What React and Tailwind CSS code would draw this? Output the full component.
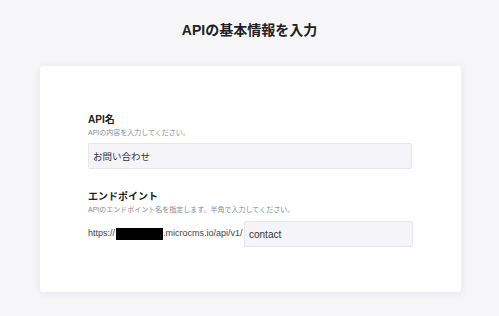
import React from "react";

const font = { fontFamily: '"Liberation Sans", "Noto Sans CJK JP", sans-serif' };

export default function App() {
    return (
        <div style={font} className="min-h-[316px] w-full bg-[#f6f6f9] pt-[20px]">
            <h1 className="text-center text-[14px] leading-[20px] font-bold text-[#222]">APIの基本情報を入力</h1>
            <section className="mx-[40px] mt-[26px] w-[421px] rounded-[3px] bg-white px-[48px] pt-[47px] pb-[45px] shadow-[0_1px_10px_rgba(20,20,60,0.08)]">
                <div>
                    <label htmlFor="apiName" className="block text-[10px] leading-[14px] font-bold text-[#222]">
                        API名
                    </label>
                    <p className="mt-[1px] text-[7px] leading-[10px] text-[#8a8a8a]">APIの内容を入力してください。</p>
                    <input
                        id="apiName"
                        type="text"
                        defaultValue="お問い合わせ"
                        className="mt-[5px] block h-[26px] w-[324px] rounded-[2px] border border-[#e6e6ec] bg-[#f5f5f9] px-[4px] text-[9.5px] text-[#333] outline-none"
                    />
                </div>
                <div className="mt-[21px]">
                    <label htmlFor="endpoint" className="block text-[10px] leading-[14px] font-bold text-[#222]">
                        エンドポイント
                    </label>
                    <p className="mt-[1px] text-[7px] leading-[10px] text-[#8a8a8a]">
                        APIのエンドポイント名を指定します。半角で入力してください。
                    </p>
                    <div className="mt-[6px] flex h-[26px] items-center">
                        <span className="text-[9px] text-[#444]">https://</span>
                        <span className="ml-[1px] h-[12px] w-[47px] bg-black"></span>
                        <span className="text-[9px] text-[#444]">.microcms.io/api/v1/</span>
                        <input
                            id="endpoint"
                            type="text"
                            defaultValue="contact"
                            className="ml-auto block h-[26px] w-[169px] rounded-[2px] border border-[#e6e6ec] bg-[#f5f5f9] px-[4px] text-[10px] text-[#333] outline-none"
                        />
                    </div>
                </div>
            </section>
        </div>
    );
}
